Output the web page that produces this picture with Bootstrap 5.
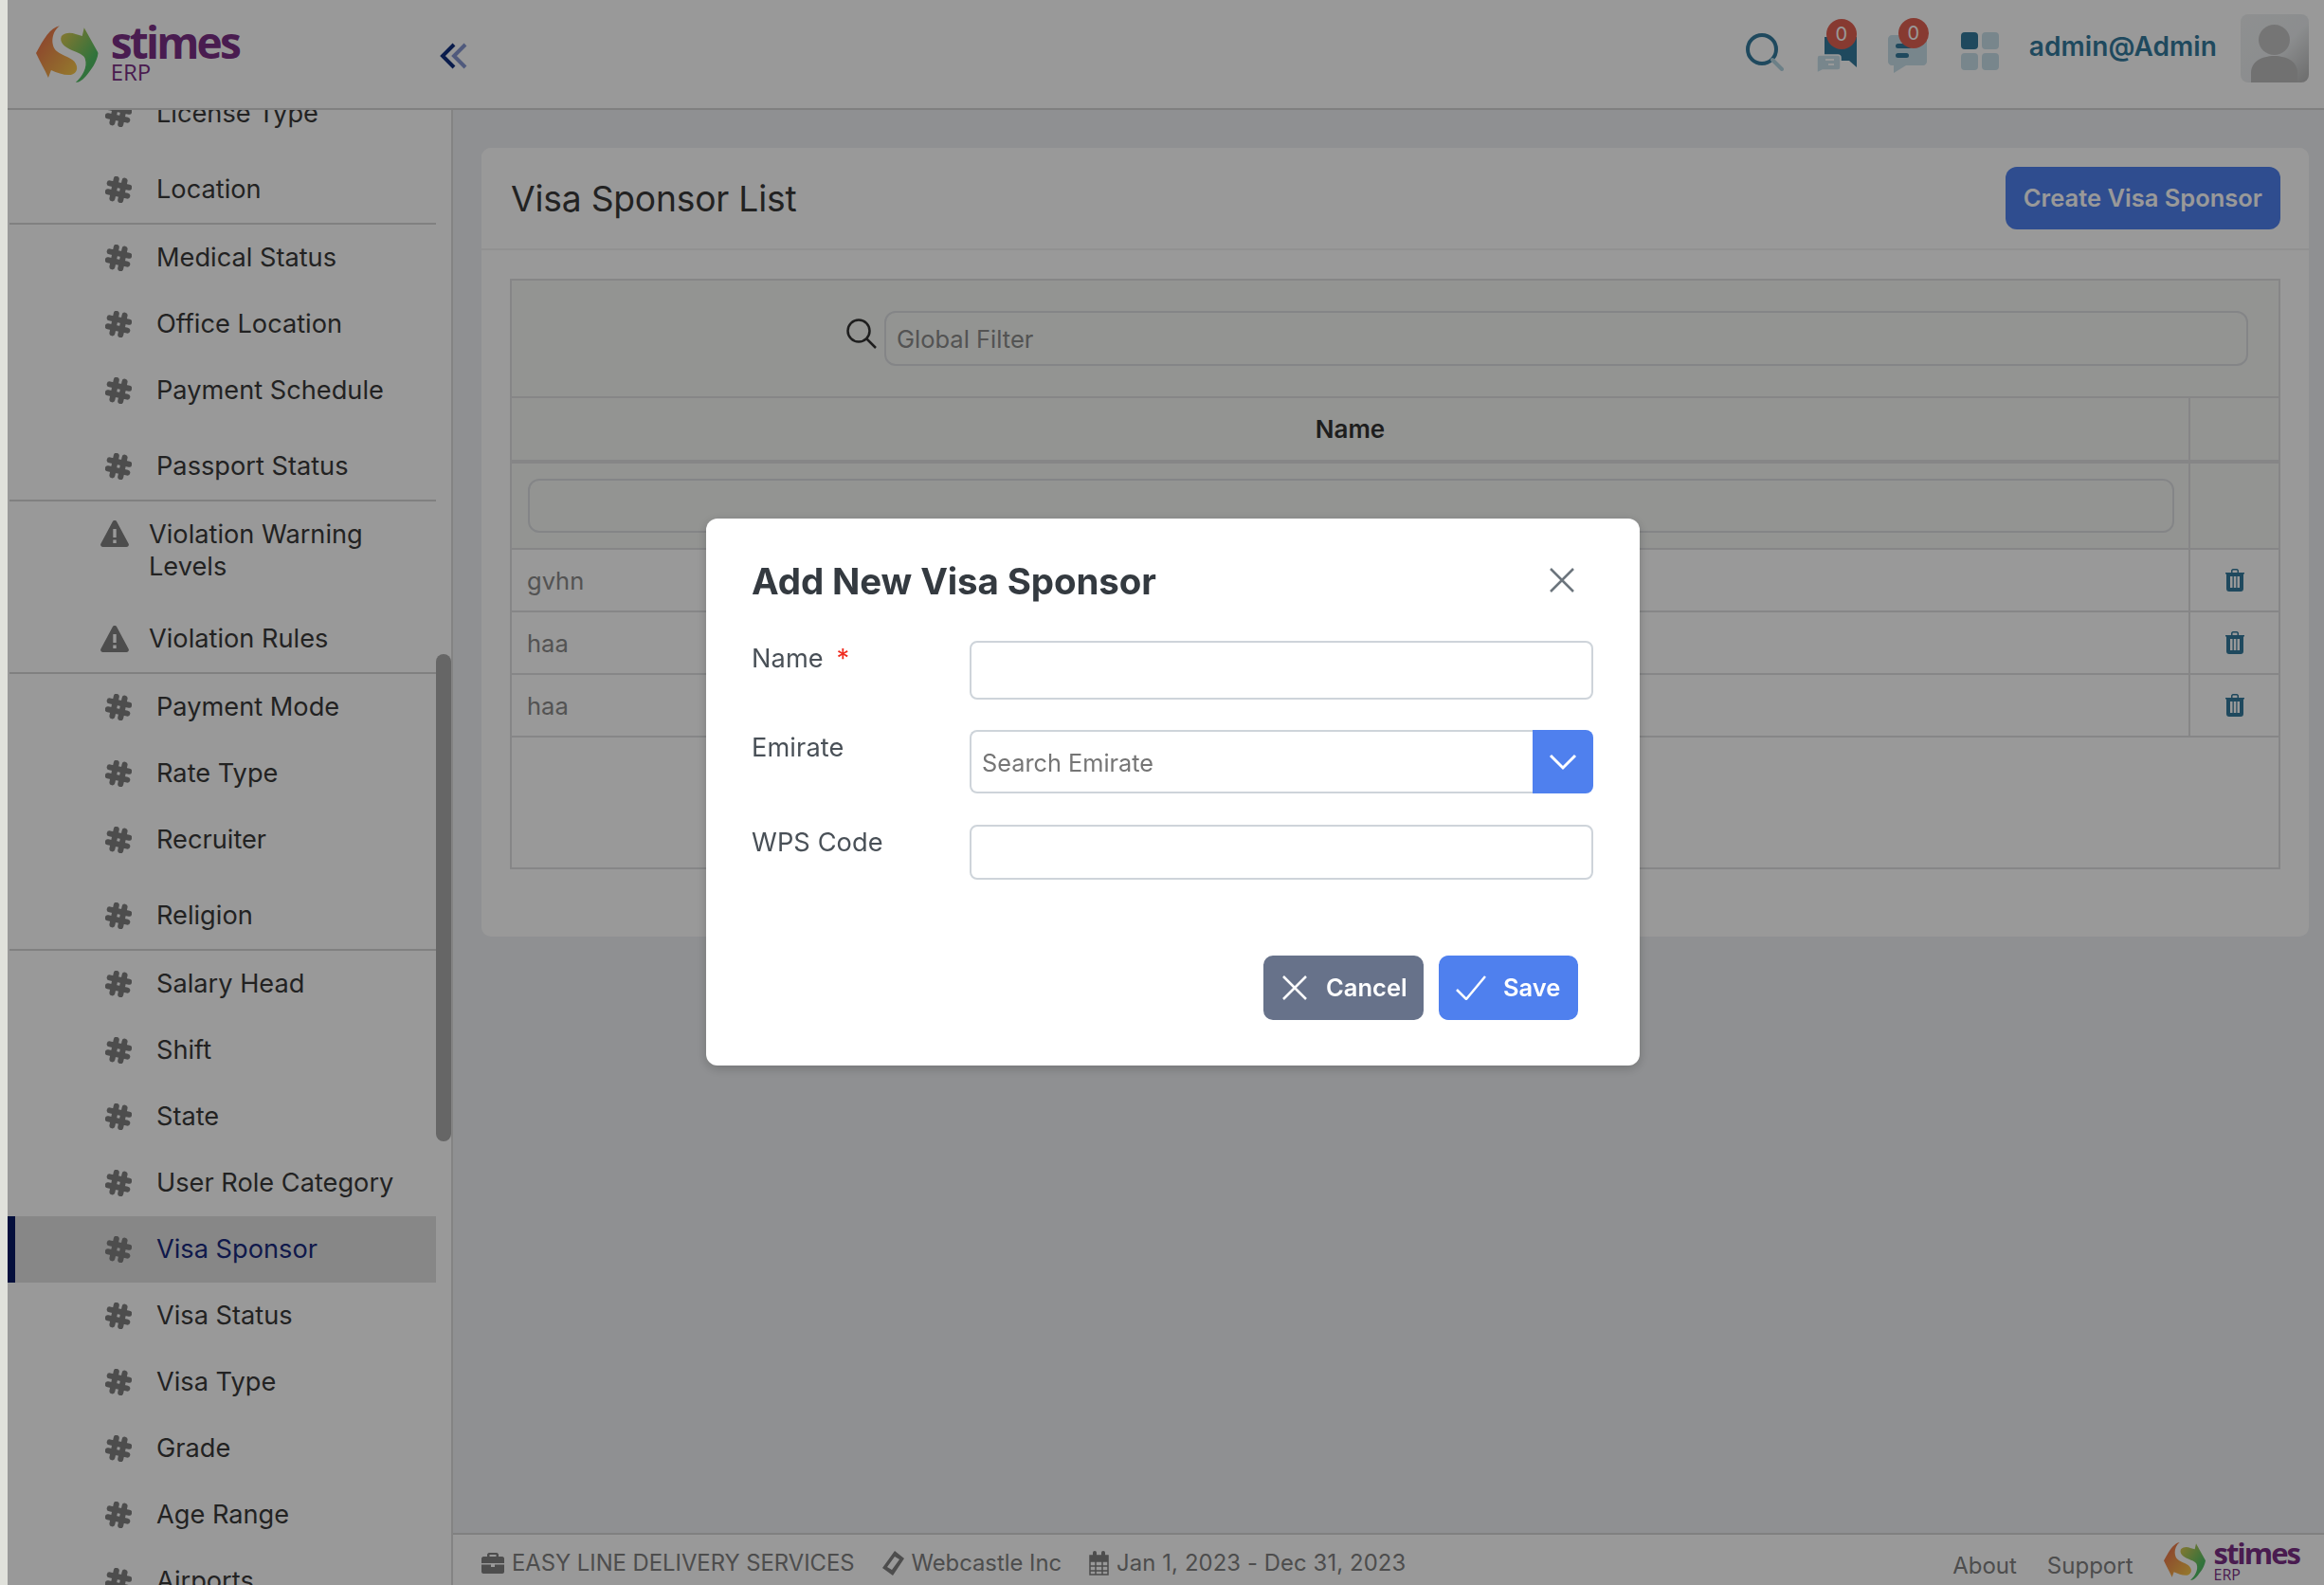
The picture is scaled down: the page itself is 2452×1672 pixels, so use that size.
<!DOCTYPE html>
<html lang="en">
<head>
<meta charset="utf-8">
<title>Visa Sponsor</title>
<link href="https://cdn.jsdelivr.net/npm/bootstrap@5.3.0/dist/css/bootstrap.min.css" rel="stylesheet">
<style>
html,body{height:100%;overflow:hidden}
body{background:#e0e1db;font-family:Inter,"Liberation Sans",sans-serif;color:#3a3a3a;font-size:26px}
.app-shell{margin-left:8px;height:1672px;width:2444px;overflow:hidden;background:#eef0f3}
.top-bar{height:116px;flex:none;background:#fff;border-bottom:2px solid #d5d5d5;padding-left:30px;padding-right:16px}
.brand-word{font-family:"Open Sans",sans-serif;font-weight:700;color:#7b2f85;line-height:.75}
.brand-erp{font-family:"Open Sans",sans-serif;color:#7b2f85;line-height:1}
.brand-lg{width:214px;flex:none}
.brand-lg .brand-word{font-size:46px;letter-spacing:-2.8px}
.brand-lg .brand-erp{font-size:24px;margin-top:3px}
.brand-sm{margin-top:-5px}
.brand-sm svg{margin-top:-3px}
.brand-sm .brand-word{font-size:31px;letter-spacing:-2px}
.brand-sm .brand-erp{font-size:16px;margin-top:3px}
.brand-text{display:flex;flex-direction:column}
.brand-lg .brand-text{margin-left:13px;margin-top:1px}
.brand-sm .brand-text{margin-left:9px}
.chev{margin-left:212px;margin-top:4px}
.user-name{font-weight:600;font-size:28px;color:#357b9d;margin-left:32px;margin-right:25px;margin-top:-16px;letter-spacing:.1px}
.icon-wrap{position:relative;display:block;margin-top:-4px}
.count-dot{position:absolute;top:-16px;width:32px;height:32px;border-radius:50%;background:#e26153;color:#fff;font-size:20px;line-height:32px;text-align:center}
.avatar-box{width:72px;height:72px;border-radius:8px;margin-top:-12px;background:linear-gradient(135deg,#eef0f1,#e9ecee 55%,#b4b4b4);overflow:hidden}
.body-row{height:1556px}
.side-panel{width:470px;flex:none;background:#fff;border-right:2px solid #dadada;overflow:hidden;position:relative}
.side-list{margin:-31px 0 0 0;padding:0;list-style:none}
.side-item{height:70px;display:flex;align-items:center;padding-left:103px;color:#3a3a3a;font-size:27.2px;width:452px}
.side-item .glyph{width:28px;height:28px;margin-right:26px;flex:none;color:#808080}
.side-item.last-in{margin-top:10px;margin-bottom:0}
.side-item.warn{padding-left:98px}
.side-item.warn .glyph{width:30px;height:28px;margin-right:21px}
.side-item.warn-tall{height:100px;align-items:flex-start;padding-top:18px;line-height:34px}
.side-item.warn-tall .glyph{margin-top:2px}
.side-item.warn-tall span{width:260px}
.side-item.on{background:#e2e2e2;border-left:8px solid #081964;padding-left:95px;color:#192a7d}
.side-rule{margin:0 0 0 2px;width:450px;height:2px;background:#d5d5d5;opacity:1;border:0}
.scroll-thumb{position:absolute;left:452px;top:574px;width:16px;height:514px;border-radius:8px;background:#aaa}
.main-col{min-width:0}
.main-area{height:1501px;padding:40px 16px 0 30px}
.sheet{background:#fff;border:0;border-radius:10px;height:832px}
.sheet-head{height:108px;padding:0 30px 0 31px;background:#fff;border-bottom:2px solid #f2f2f2;border-radius:10px 10px 0 0}
.sheet-title{font-size:37.2px;font-weight:400;margin:3px 0 0;color:#393939;letter-spacing:-.2px}
.btn-blue{background:#4f80ee;border:0;color:#fff;font-weight:600;font-size:25.5px;border-radius:12px;height:66px;padding:0 19px}
.sheet-inner{padding:30px 30px 0 30px}
.grid-wrap{border:2px solid #dfe0e2;height:623px}
.filter-band{height:124px;background:#f5f7f4;border-bottom:2px solid #dfe0e2;padding:32px 32px 0 0;justify-content:flex-end}
.filter-band input{width:1439px;height:58px}
.soft-input{border:2px solid #dcdee1;border-radius:12px;background:transparent;font-size:25.5px;padding:0 11px;color:#777;font-family:inherit}
.soft-input::placeholder{color:#8a8a8a}
.grid-table{width:100%;border-collapse:collapse;table-layout:fixed;margin:0}
.grid-table td,.grid-table th{border-right:2px solid #dfe0e2;border-bottom:2px solid #dfe0e2;padding:0}
.grid-table td:last-child,.grid-table th:last-child{border-right:0}
.col-act{width:94px}
.row-head th{height:67px;background:#f5f7f4;text-align:center;font-weight:600;color:#333;font-size:26px;border-bottom-width:4px}
.row-filter td{height:92px;background:#f5f7f4;padding:0 0 0 17px}
.row-filter input{width:1737px;height:57px;display:block}
.row-data td{height:66px;padding:2px 0 0 16px;color:#8a8a8a;font-size:25.5px}
.row-data td.cell-act{padding:0;text-align:center}
.trash{width:20px;height:24px;display:inline-block;vertical-align:middle;color:#357b9d;margin-top:-3px}
.page-foot{height:55px;background:#fff;border-top:2px solid #d5d5d5;padding:0 26px 0 30px;position:relative;color:#808080;font-size:23.8px}
.foot-left{gap:29px;margin-top:6px}
.foot-left svg{margin-right:8px;flex:none}
.foot-date{letter-spacing:.12px}
.foot-right{gap:32px;margin-top:10px}
.foot-right a{color:#808080;text-decoration:none;font-size:24px;margin-top:2px}
.dim-layer{position:fixed;top:0;left:8px;right:0;bottom:0;background:#000;opacity:.4;z-index:1050}
.visa-modal{position:fixed;left:0;top:0;width:100%;height:100%;z-index:1055;overflow:hidden}
.visa-dialog{width:985px;max-width:985px;margin:547px 0 0 745px}
.visa-content{height:577px;border:0;background:#fff;border-radius:12px;box-shadow:0 3px 12px rgba(0,0,0,.2);display:block}
.visa-head{height:100px;padding:44px 48px 0;border:0;position:relative;display:block}
.visa-title{font-size:38.5px;font-weight:700;color:#343a40;margin:0;line-height:44px;letter-spacing:-.12px}
.x-close{position:absolute;left:890px;top:52px;padding:0;width:26px;height:26px;border:0;background:none;color:#6c757d;display:block}
.x-close svg{display:block}
.visa-body{padding:0 48px 0 48px;position:relative}
.form-line{display:flex}
.form-line label{width:230px;flex:none;color:#495057;font-size:27.2px;line-height:34px;padding-top:2px;letter-spacing:.1px}
.req{color:#f02a1e;margin-left:6px}
.box-input{width:658px;border:2px solid #ced4da;border-radius:8px;background:#fff;display:block;font-family:inherit}
.combo{width:658px;height:67px;display:flex}
.combo input{flex:1;min-width:0;border:2px solid #ced4da;border-right:0;border-radius:8px 0 0 8px;padding:3px 11px 0;font-size:25.3px;font-family:inherit;color:#757575}
.combo input::placeholder{color:#757575}
.combo-btn{width:64px;flex:none;background:#4f80ee;border:0;border-radius:0 8px 8px 0;display:flex;align-items:center;justify-content:center;padding:0}
.visa-foot{position:absolute;left:588px;top:461px;display:flex;gap:16px}
.act-btn{height:68px;border:0;border-radius:10px;color:#fff;font-weight:600;font-size:25.5px;display:flex;align-items:center;padding:0;font-family:inherit}
.act-cancel{width:169px;background:#67728a;padding-left:20px}
.act-save{width:147px;background:#4f80ee;padding-left:18px}
</style>
</head>
<body>
<svg width="0" height="0" style="position:absolute">
<defs>
<linearGradient id="lgA" x1="0" y1="0" x2="1" y2="1"><stop offset="0" stop-color="#e9644b"/><stop offset="1" stop-color="#f8cf4b"/></linearGradient>
<linearGradient id="lgB" x1="0" y1="0" x2="1" y2="1"><stop offset="0" stop-color="#e8c850"/><stop offset=".7" stop-color="#53c064"/><stop offset="1" stop-color="#4fb060"/></linearGradient>
<symbol id="cog" viewBox="0 0 28 28"><g transform="rotate(12 14 14)" fill="none" stroke="currentColor" stroke-width="6" stroke-linecap="round"><path d="M9.500 3.500V24.500"/><path d="M18.500 3.500V24.500"/><path d="M3.500 9.500H24.500"/><path d="M3.500 18.500H24.500"/></g></symbol>
<symbol id="warn" viewBox="0 0 30 28"><path fill="currentColor" fill-rule="evenodd" d="M15 0c1 0 1.800.5 2.300 1.400l12.300 23c.9 1.700-.3 3.600-2.200 3.600H2.600C.7 28-.5 26.100.4 24.400l12.300-23C13.200.5 14 0 15 0zM13.300 9v9h3.400V9zm0 11.500V24h3.400v-3.500z"/></symbol>
<symbol id="logo" viewBox="0 0 66 60"><path fill="url(#lgA)" d="M25 0C15 2 8 14 0 29c4 9 9 17 13 26l3-8c7 3 15 6 21 5 6-1 8-7 5-12-3-6-14-8-20-13-6-5-7-19 3-27z"/><path fill="url(#lgB)" d="M27 11c4-4 10-4 15-2l7 2 2-9 15 27c-2 11-8 18-12 23-4 5-8 8-12 8 7-6 13-16 10-25-1-4-7-6-14-9-7-3-14-8-11-15z"/></symbol>
<symbol id="trash" viewBox="0 0 20 24"><path fill="currentColor" fill-rule="evenodd" d="M0 4h6V2c0-1 1-2 2-2h4c1 0 2 1 2 2v2h6v1.500H19V21c0 2-1 3-3 3H4c-2 0-3-1-3-3V5.500H0zM7.500 4h5V2.200c0-.4-.2-.7-.6-.7H8.100c-.4 0-.6.3-.6.7zM5 8v12h2.500V8zm3.800 0v12h2.500V8zm3.700 0v12H15V8z"/></symbol>
</defs>
</svg>
<div class="app-shell d-flex flex-column">
<header class="top-bar d-flex align-items-center">
<div class="brand-lg d-flex align-items-center">
<svg width="66" height="60"><use href="#logo"/></svg>
<div class="brand-text"><span class="brand-word">stimes</span><span class="brand-erp">ERP</span></div>
</div>
<svg class="chev" width="30" height="28" viewBox="0 0 30 28" fill="none" stroke-width="4"><path d="M15 2 3 14l12 12" stroke="#12307f"/><path d="M27 2 15 14l12 12" stroke="#8596d0"/></svg>
<div class="ms-auto d-flex align-items-center">
<svg style="margin-right:2px;margin-top:-4px" width="40" height="40" viewBox="0 0 40 40" fill="none" stroke-width="4"><circle cx="17" cy="17" r="15" stroke="#357b9d"/><path d="M28 28 38 38" stroke="#b5d5e2" stroke-width="4" stroke-linecap="round"/></svg>
<span class="icon-wrap" style="width:43px;height:38px;margin-left:32px">
<svg width="43" height="38" viewBox="0 0 43 38"><path fill="#357b9d" d="M9 0h34v32l-8-7H9z"/><path fill="#c8e0ea" stroke="#fff" stroke-width="1.500" d="M3 19h20c2 0 3 1 3 3v10c0 2-1 3-3 3H7l-6 3V22c0-2 1-3 3-3z"/><path stroke="#fff" stroke-width="2" d="M10 24h9M13 29h6"/></svg>
<span class="count-dot" style="left:11px">0</span></span>
<span class="icon-wrap" style="width:41px;height:40px;margin-left:33px">
<svg width="41" height="40" viewBox="0 0 41 40"><path fill="#c8e0ea" d="M4 0h33c2 0 4 2 4 4v24c0 2-2 4-4 4H19l-13 8v-8H4c-2 0-4-2-4-4V4c0-2 2-4 4-4z"/><rect x="8" y="9" width="17" height="5" rx="2.500" fill="#357b9d"/><rect x="8" y="19" width="14" height="5" rx="2.500" fill="#357b9d"/></svg>
<span class="count-dot" style="left:11px">0</span></span>
<svg style="margin-left:36px;margin-top:-6px" width="40" height="40" viewBox="0 0 40 40"><rect x="0" y="0" width="18" height="18" rx="4" fill="#357b9d"/><rect x="22" y="0" width="18" height="18" rx="4" fill="#c8e0ea"/><rect x="0" y="22" width="18" height="18" rx="4" fill="#c8e0ea"/><rect x="22" y="22" width="18" height="18" rx="4" fill="#c8e0ea"/></svg>
<span class="user-name">admin@Admin</span>
<div class="avatar-box"><svg width="72" height="72" viewBox="0 0 72 72"><ellipse cx="35.500" cy="27" rx="16.500" ry="16" fill="#c4c4c4"/><path d="M11 72V62c0-12 11-18 24.500-18S60 50 60 62v10z" fill="#bcbcbc"/></svg></div>
</div>
</header>
<div class="body-row d-flex">
<aside class="side-panel">
<ul class="side-list">
<li class="side-item"><svg class="glyph"><use href="#cog"/></svg><span>License Type</span></li>
<li class="side-item last-in"><svg class="glyph"><use href="#cog"/></svg><span>Location</span></li>
<li><hr class="side-rule"></li>
<li class="side-item"><svg class="glyph"><use href="#cog"/></svg><span>Medical Status</span></li>
<li class="side-item"><svg class="glyph"><use href="#cog"/></svg><span>Office Location</span></li>
<li class="side-item"><svg class="glyph"><use href="#cog"/></svg><span>Payment Schedule</span></li>
<li class="side-item last-in"><svg class="glyph"><use href="#cog"/></svg><span>Passport Status</span></li>
<li><hr class="side-rule"></li>
<li class="side-item warn warn-tall"><svg class="glyph"><use href="#warn"/></svg><span>Violation Warning Levels</span></li>
<li class="side-item warn last-in"><svg class="glyph"><use href="#warn"/></svg><span>Violation Rules</span></li>
<li><hr class="side-rule"></li>
<li class="side-item"><svg class="glyph"><use href="#cog"/></svg><span>Payment Mode</span></li>
<li class="side-item"><svg class="glyph"><use href="#cog"/></svg><span>Rate Type</span></li>
<li class="side-item"><svg class="glyph"><use href="#cog"/></svg><span>Recruiter</span></li>
<li class="side-item last-in"><svg class="glyph"><use href="#cog"/></svg><span>Religion</span></li>
<li><hr class="side-rule"></li>
<li class="side-item"><svg class="glyph"><use href="#cog"/></svg><span>Salary Head</span></li>
<li class="side-item"><svg class="glyph"><use href="#cog"/></svg><span>Shift</span></li>
<li class="side-item"><svg class="glyph"><use href="#cog"/></svg><span>State</span></li>
<li class="side-item"><svg class="glyph"><use href="#cog"/></svg><span>User Role Category</span></li>
<li class="side-item on"><svg class="glyph"><use href="#cog"/></svg><span>Visa Sponsor</span></li>
<li class="side-item"><svg class="glyph"><use href="#cog"/></svg><span>Visa Status</span></li>
<li class="side-item"><svg class="glyph"><use href="#cog"/></svg><span>Visa Type</span></li>
<li class="side-item"><svg class="glyph"><use href="#cog"/></svg><span>Grade</span></li>
<li class="side-item"><svg class="glyph"><use href="#cog"/></svg><span>Age Range</span></li>
<li class="side-item"><svg class="glyph"><use href="#cog"/></svg><span>Airports</span></li>
</ul>
<div class="scroll-thumb"></div>
</aside>
<div class="main-col flex-grow-1 d-flex flex-column">
<main class="main-area">
<section class="sheet card">
<div class="sheet-head d-flex align-items-center justify-content-between">
<h1 class="sheet-title">Visa Sponsor List</h1>
<button class="btn btn-blue" type="button">Create Visa Sponsor</button>
</div>
<div class="sheet-inner">
<div class="grid-wrap">
<div class="filter-band d-flex">
<svg class="me-2" width="32" height="32" viewBox="0 0 32 32" fill="none" stroke="#333" stroke-width="2.500" style="margin-top:8px"><circle cx="13" cy="13" r="11.500"/><path d="M21 21 31 31"/></svg>
<input class="soft-input" placeholder="Global Filter">
</div>
<table class="grid-table">
<colgroup><col><col class="col-act"></colgroup>
<tr class="row-head"><th>Name</th><th></th></tr>
<tr class="row-filter"><td><input class="soft-input"></td><td></td></tr>
<tr class="row-data"><td>gvhn</td><td class="cell-act"><svg class="trash"><use href="#trash"/></svg></td></tr>
<tr class="row-data"><td>haa</td><td class="cell-act"><svg class="trash"><use href="#trash"/></svg></td></tr>
<tr class="row-data"><td>haa</td><td class="cell-act"><svg class="trash"><use href="#trash"/></svg></td></tr>
</table>
</div>
</div>
</section>
</main>
<footer class="page-foot d-flex align-items-center justify-content-between">
<div class="foot-left d-flex align-items-center">
<span class="d-flex align-items-center"><svg width="24" height="22" viewBox="0 0 24 22"><path fill="currentColor" d="M8 0h8c1 0 2 1 2 2v2h4c1 0 2 1 2 2v5H0V6c0-1 1-2 2-2h4V2c0-1 1-2 2-2zm.5 2v2h7V2zM0 12.500h10V15h4v-2.500h10V20c0 1-1 2-2 2H2c-1 0-2-1-2-2z"/></svg>EASY LINE DELIVERY SERVICES</span>
<span class="d-flex align-items-center"><svg width="23" height="26" viewBox="0 0 23 26"><path fill="currentColor" fill-rule="evenodd" d="M13 0 23 8 11 26 0 18zM13 6 18 9 10 20 5 17z"/></svg>Webcastle Inc</span>
<span class="d-flex align-items-center foot-date"><svg width="21" height="26" viewBox="0 0 21 26"><path fill="none" stroke="currentColor" stroke-width="1.500" d="M1 5h19v20H1zM1 11h19M1 16h19M1 21h19M7 5v20M14 5v20"/><path fill="currentColor" d="M1 5h19v6H1z"/><rect x="4" width="4" height="8" rx="2" fill="currentColor"/><rect x="13" width="4" height="8" rx="2" fill="currentColor"/></svg>Jan 1, 2023 - Dec 31, 2023</span>
</div>
<div class="foot-right d-flex align-items-center">
<a href="#">About</a><a href="#">Support</a>
<div class="brand-sm d-flex align-items-center"><svg width="44" height="40"><use href="#logo"/></svg><div class="brand-text"><span class="brand-word">stimes</span><span class="brand-erp">ERP</span></div></div>
</div>
</footer>
</div>
</div>
</div>
<div class="dim-layer"></div>
<div class="visa-modal">
<div class="modal-dialog visa-dialog">
<div class="modal-content visa-content">
<div class="modal-header visa-head">
<h5 class="modal-title visa-title">Add New Visa Sponsor</h5>
<button class="x-close" type="button" aria-label="Close"><svg width="26" height="26" viewBox="0 0 26 26" fill="none" stroke="currentColor" stroke-width="2.500"><path d="M1 1l24 24M25 1 1 25"/></svg></button>
</div>
<div class="modal-body visa-body">
<div class="form-line" style="margin-top:29px"><label>Name <span class="req">*</span></label><input class="box-input" style="height:62px"></div>
<div class="form-line" style="margin-top:32px"><label>Emirate</label><div class="combo"><input placeholder="Search Emirate"><button class="combo-btn" type="button"><svg width="30" height="18" viewBox="0 0 30 18" fill="none" stroke="#fff" stroke-width="3"><path d="M2 2 15 15 28 2"/></svg></button></div></div>
<div class="form-line" style="margin-top:33px"><label>WPS Code</label><input class="box-input" style="height:58px"></div>
</div>
<div class="visa-foot">
<button class="act-btn act-cancel" type="button"><svg width="26" height="26" viewBox="0 0 26 26" fill="none" stroke="#fff" stroke-width="2.500" style="margin-right:20px"><path d="M1 1l24 24M25 1 1 25"/></svg>Cancel</button>
<button class="act-btn act-save" type="button"><svg width="32" height="26" viewBox="0 0 32 26" fill="none" stroke="#fff" stroke-width="2.500" style="margin-right:18px"><path d="M1 15l10 10L31 1"/></svg>Save</button>
</div>
</div>
</div>
</div>
<script src="https://cdn.jsdelivr.net/npm/bootstrap@5.3.0/dist/js/bootstrap.bundle.min.js"></script>
</body>
</html>
